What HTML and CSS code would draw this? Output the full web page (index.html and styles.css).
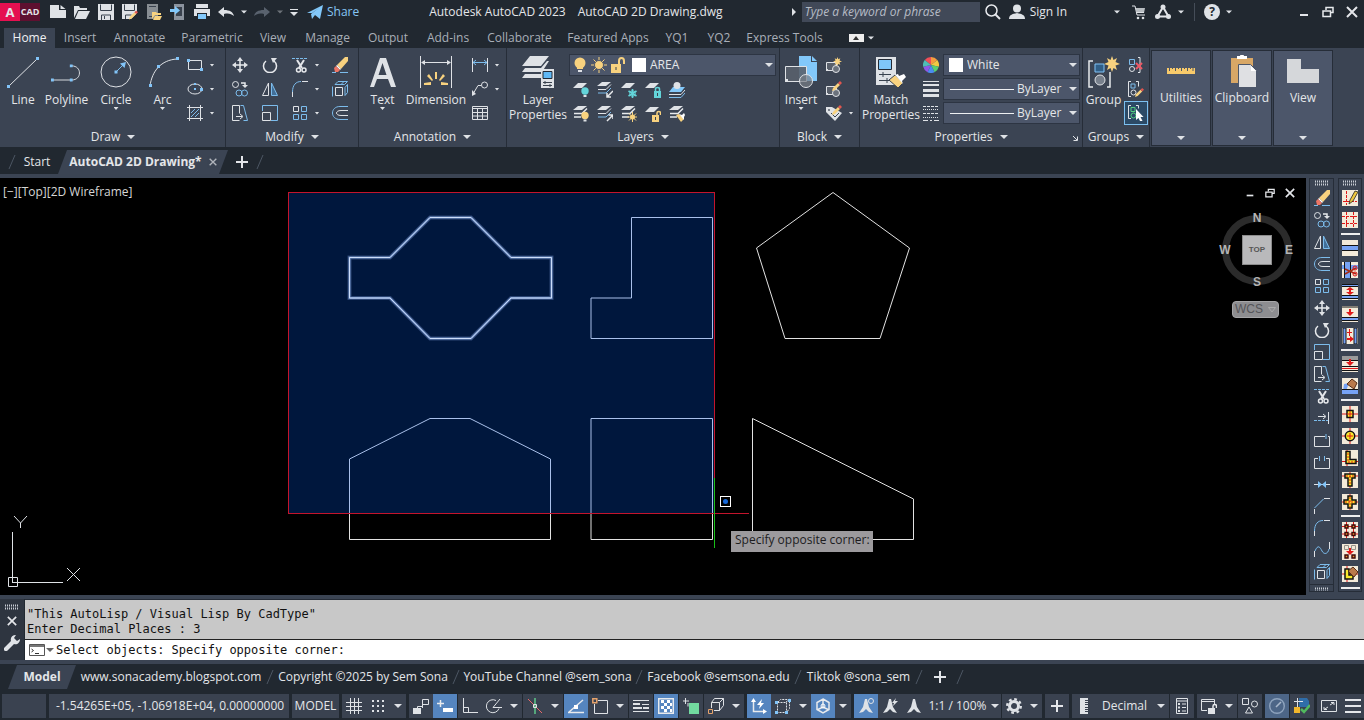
FILE: index.html
```
<!DOCTYPE html>
<html lang="en">
<head>
<meta charset="utf-8">
<title>Autodesk AutoCAD 2023 - AutoCAD 2D Drawing.dwg</title>
<link rel="stylesheet" href="styles.css">
</head>
<body>
<svg class="defs" aria-hidden="true">
  <defs>
    <symbol id="chev" viewBox="0 0 8 8"><path class="fw" d="M0 2h8L4 6z"/></symbol>
    <symbol id="slash" viewBox="0 0 8 16"><path class="slashline" d="M1 15 7 1"/></symbol>
    <symbol id="plus" viewBox="0 0 16 16"><path class="w2" d="M8 2v12M2 8h12"/></symbol>
    <symbol id="grip" viewBox="0 0 16 6"><path class="grip" d="M1 1.500h14M1 4.500h14"/></symbol>

    <symbol id="new" viewBox="0 0 16 16"><path class="fw" d="M0 1h9v5h7v8H0zM10.500 1l5 4h-5z"/></symbol>
    <symbol id="open" viewBox="0 0 16 16"><path class="fw" d="M0 2h5l1 2h7v2H4L0 14zM4.500 7H16l-4 8H1z"/></symbol>
    <symbol id="save" viewBox="0 0 16 16"><path class="fw" d="M0 0h16v16H0z"/><path class="dk" d="M2.500.500v6h11v-6M3.500 16v-5h9v5M6.500 12v3"/></symbol>
    <symbol id="pencil" viewBox="0 0 10 10"><path fill="#f8d27f" d="M1 7 6 2l2 2-5 5-3 1z"/><path fill="#e2564f" d="m6 2 2-2 2 2-2 2z"/></symbol>
    <symbol id="saveas" viewBox="0 0 16 16"><path class="fw" d="M0 0h15v9l-6 6H0z"/><path class="dk" d="M2.500.500v6h10v-6M3.500 15v-4h6"/><use href="#pencil" x="7" y="6" width="9" height="10"/></symbol>
    <symbol id="webopen" viewBox="0 0 16 16"><path class="fw" fill-opacity=".55" d="M1 0h11v15H1z"/><path class="dk" d="M3 2.500h7M3 12.500h4"/><path fill="#f8d27f" d="M6 8h4l1 1h4v2H9l-3 4zM9 12h7l-2 4H7z"/></symbol>
    <symbol id="websave" viewBox="0 0 16 16"><path fill="#8b939e" d="M4 0h10v16H4z"/><path fill="#39424e" d="M6 3h6v9H6z"/><path fill="#82c8fa" d="M0 5h5V2l5 4.500-5 4V8H0z"/></symbol>
    <symbol id="print" viewBox="0 0 16 16"><path class="fw" d="M2 0h12v4H2zM0 5h16v7h-3V9H3v3H0z"/><path fill="#82c8fa" d="M4 10h8v5H4z"/></symbol>
    <symbol id="undo" viewBox="0 0 16 16"><path class="fw" d="M0 8l6-5v3c6 0 9 2 10 6-3-2-5-3-10-2v3z"/></symbol>
    <symbol id="redo" viewBox="0 0 16 16"><path fill="#59626e" d="M16 8l-6-5v3C4 6 1 8 0 12c3-2 5-3 10-2v3z"/></symbol>
    <symbol id="custom" viewBox="0 0 10 10"><path class="w" d="M1 2.500h8"/><path class="fw" d="M1 5h8L5 9z"/></symbol>
    <symbol id="share" viewBox="0 0 16 16"><path fill="#82c8fa" d="M0 9 16 1l-3 14-5-4-3 4-1-5 8-6-7 5z"/></symbol>
    <symbol id="glass" viewBox="0 0 16 16"><circle class="wm" cx="6.500" cy="6.500" r="5.500"/><path class="w2" d="m10 10 5 5"/></symbol>
    <symbol id="user" viewBox="0 0 16 16"><circle class="fw" cx="8" cy="4.500" r="4"/><path class="fw" d="M0 15c0-4 3-5 8-6 5 1 8 2 8 6z"/></symbol>
    <symbol id="cart" viewBox="0 0 16 16"><path class="w" d="M1 2h3l2 9h8M5 8.500h8"/><path class="fw" fill-opacity=".8" d="M4.500 4H14l-1 5H6z"/><circle class="fw" cx="7" cy="14" r="1.300"/><circle class="fw" cx="12" cy="14" r="1.300"/></symbol>
    <symbol id="tri" viewBox="0 0 16 16"><path class="w2" d="M8 3 2.500 12.500h11z"/><circle class="fw" cx="8" cy="3" r="2.500"/><circle class="fw" cx="2.500" cy="12.500" r="2.500"/><circle class="fw" cx="13.500" cy="12.500" r="2.500"/></symbol>
    <symbol id="restore" viewBox="0 0 12 12"><path class="wm" d="M4 4V1.500h7v5H9M1 5h7.500v5.500H1z"/></symbol>
    <symbol id="close" viewBox="0 0 12 12"><path class="w2" d="m1 1 10 10M11 1 1 11"/></symbol>
    <symbol id="min" viewBox="0 0 12 12"><path class="w2" d="M2 9h8"/></symbol>

    <symbol id="line" viewBox="0 0 32 32"><path class="w" d="M2 30 30 3"/><path class="fb" d="M0 29h3v3H0zM29 1h3v3h-3z"/></symbol>
    <symbol id="pline" viewBox="0 0 34 32"><path class="w" d="M2 24.500h20c11 0 11-15 0-15"/><path class="fb" d="M0 23h3v3H0zM20 23h3v3h-3zM20 8h3v3h-3z"/></symbol>
    <symbol id="circle" viewBox="0 0 32 32"><circle class="w" cx="16" cy="16" r="15"/><path class="b" d="m16 16 9-9"/><path class="fb" d="M14.500 14.500h3v3h-3zM26 6l-6 1.500L24.500 12z"/></symbol>
    <symbol id="arc" viewBox="0 0 32 32"><path class="w" d="M3 30C5 15 14 4 30 3"/><path class="fb" d="M2 28h3v3H2zM10 9h3v3h-3zM29 1h3v3h-3z"/></symbol>
    <symbol id="rect" viewBox="0 0 16 16"><path class="w" d="M1.500 3.500h13v9h-13z"/><path class="fb" d="M0 2h3v3H0zM13 11h3v3h-3z"/></symbol>
    <symbol id="ellipse" viewBox="0 0 16 16"><ellipse class="w" cx="8" cy="8" rx="7" ry="5"/><path class="fb" d="M7 2h2v2H7zM7 7h2v2H7zM13 7h3v3h-3z"/></symbol>
    <symbol id="hatch" viewBox="0 0 16 16"><path class="w" d="M2.500 0v16M13.500 0v16M0 2.500h16M0 13.500h16"/><path class="b" d="m4 8 4-4M4 12l8-8M8 12l4-4"/></symbol>

    <symbol id="move" viewBox="0 0 16 16"><path class="wm" d="M8 2v12M2 8h12"/><path class="fw" d="m8 0 3 4H5zM8 16l-3-4h6zM0 8l4-3v6zM16 8l-4 3V5z"/></symbol>
    <symbol id="rotate" viewBox="0 0 16 16"><path class="wm" d="M4 4a6.500 6.500 0 1 0 8 0"/><path class="fw" d="M9 1h6l-4 5z"/></symbol>
    <symbol id="trim" viewBox="0 0 16 16"><path class="b dash" d="M0 1.500h16"/><path class="w2" d="m5 3 5 8M12 3 7 11"/><circle class="wm" cx="6.500" cy="13" r="2"/><circle class="wm" cx="12" cy="13" r="2"/></symbol>
    <symbol id="erase" viewBox="0 0 16 16"><path fill="#f8d27f" d="m5 8 8-8h3v4l-7 8z"/><path fill="#fff" d="m4 9 1-1 4 4-1 1z"/><path fill="#ed7565" d="m2 11 2-2 4 4-2 2H3z"/><path class="b" d="M0 15.500h4M8 15.500h8"/></symbol>
    <symbol id="copy" viewBox="0 0 16 16"><circle class="w" cx="3.500" cy="3.500" r="3"/><circle class="b" cx="7" cy="12" r="3"/><circle class="b" cx="12.500" cy="12" r="3"/><path class="wm" d="M9 2h4v3"/><path class="fw" d="M10 4h6l-3 3z"/></symbol>
    <symbol id="mirror" viewBox="0 0 16 16"><path class="w" d="M6.500 2v12.500h-6z"/><path class="b halfblue" d="M9.500 2v12.500h6z"/></symbol>
    <symbol id="fillet" viewBox="0 0 16 16"><path class="b" d="M.500 11C.500 4 4 .500 9 .500"/><path class="w" d="M10 .500h6M.500 11v5"/></symbol>
    <symbol id="explode" viewBox="0 0 16 16"><path class="w" d="M3.500 6.500h7v8h-7z"/><path class="b" d="M.500 5.500v10M3 3.500 6 .500h9.500l-3 3zM13 14.500v-8l2.500-3v8zM9 3.500l3-3"/></symbol>
    <symbol id="stretch" viewBox="0 0 16 16"><path class="w" d="M7.500 15.500h-7V.500h7v8"/><path class="b" d="M8.500.500h3l4 15h-4"/><path class="w" d="M4 11.500h6M8 9l3 2.500L8 14"/></symbol>
    <symbol id="scale" viewBox="0 0 16 16"><path class="b" d="M.500 6V.500h15v15H9"/><path class="w" d="M.500 7.500h8v8h-8z"/></symbol>
    <symbol id="array" viewBox="0 0 16 16"><path class="w" d="M1.500 1.500h5v5h-5z"/><path class="b" d="M9.500 1.500h5v5h-5zM1.500 9.500h5v5h-5zM9.500 9.500h5v5h-5z"/></symbol>
    <symbol id="offset" viewBox="0 0 16 16"><path class="b" d="M16 1.500H8c-10 0-10 13 0 13h8"/><path class="w" d="M16 5.500H9c-6 0-6 5 0 5h7"/></symbol>

    <symbol id="text" viewBox="0 0 32 32"><path class="fw" fill-rule="evenodd" d="M13 2h6l10 29h-5l-3-8H10l-3 8H3zM11.500 19h8L15.500 7z"/></symbol>
    <symbol id="dim" viewBox="0 0 32 32"><path class="w" d="M.500 0v32M31.500 0v32M2 6.500h28"/><path class="fw" d="m1 6.500 4-2.500v5zM31 6.500l-4-2.500v5z"/><path class="fy" d="M15 16h2v7h-2zM7 20l2-2 4 6-1 1zM25 20l-2-2-4 6 1 1zM4 27l7-1v3H4zM28 27l-7-1v3h7z"/></symbol>
    <symbol id="dims" viewBox="0 0 16 16"><path class="w" d="M.500 1v14M15.500 1v14"/><path class="b" d="M1 5.500h14M4 3 1 5.500 4 8M12 3l3 2.500L12 8"/></symbol>
    <symbol id="leader" viewBox="0 0 16 16"><circle class="w" cx="12.500" cy="4" r="3"/><path class="w" d="M9 4.500H6L1 13"/><path class="fw" d="M0 15v-6l4 4z"/></symbol>
    <symbol id="table" viewBox="0 0 16 16"><path class="w" d="M.500 1.500h15v13H.500zM.500 3.500h15M.500 7.500h15M.500 11h15M5.500 4v10M10.500 4v10"/></symbol>

    <symbol id="layprop" viewBox="0 0 32 32"><path class="fw" d="M8 0h19l-8 10H0zM0 16l3-4h16l6-7h2l-7 11zM0 22l3-4h16v4z"/><path class="fw" d="M19 13h13v19H19z"/><path fill="#5fb8f5" stroke="#222a35" d="M21 15.500h9v7h-9z"/><path class="dk" d="M21 26.500h9M21 29.500h9M23 25v3M28 28v3"/></symbol>
    <symbol id="bulb" viewBox="0 0 16 16"><circle class="fy" cx="8" cy="6" r="5.500"/><path class="fy" d="M5 9h6v3H5z"/><path class="fw" d="M6 13h4v2H6z"/></symbol>
    <symbol id="sun" viewBox="0 0 16 16"><path class="ys" d="M8 0v16M0 8h16M2.500 2.500l11 11M13.500 2.500l-11 11"/><circle class="fy" cx="8" cy="8" r="4.500" stroke="#4c5669"/></symbol>
    <symbol id="lock" viewBox="0 0 16 16"><path class="fy" d="M1 7h10v9H1z"/><path fill="none" stroke="#f8d27f" stroke-width="2" d="M9 7V4c0-4 5-4 5 0v3"/><path class="dk" d="M6 10v3"/></symbol>
    <symbol id="sheet" viewBox="0 0 16 16"><path class="fw" d="M5 1h9L9 6H0z"/></symbol>
    <symbol id="stack" viewBox="0 0 16 16"><path class="fw" d="M5 0h9l-5 4H0z"/><path class="w" d="M1 7.500h8l5-5"/><path class="b" d="M1 11h8l5-5"/></symbol>
    <symbol id="stackw" viewBox="0 0 16 16"><path class="fw" d="M5 0h9l-5 4H0z"/><path class="wm" d="M1 7.500h8l5-5M1 11h7"/></symbol>
    <symbol id="l1" viewBox="0 0 16 16"><use href="#sheet"/><circle cx="12" cy="9" r="3.700" fill="#63d4d9"/><path class="fw" d="M10.500 13h3v2h-3z"/></symbol>
    <symbol id="l2" viewBox="0 0 16 16"><use href="#stack"/><path class="wm" d="m16 9-6 6M10 11v4h4"/></symbol>
    <symbol id="l3" viewBox="0 0 16 16"><use href="#sheet"/><path fill="none" stroke="#63d4d9" stroke-width="1.600" d="M11.500 7v9M7.500 9l8 5M15.500 9l-8 5"/><circle cx="11.500" cy="11.500" r="2.800" fill="none" stroke="#63d4d9"/></symbol>
    <symbol id="l4" viewBox="0 0 16 16"><use href="#sheet"/><path fill="#63d4d9" d="M9 9h7v7H9z"/><path fill="none" stroke="#63d4d9" stroke-width="1.500" d="M10.500 9V7c0-2 4-2 4 0v2"/><path class="dk" d="M12.500 11v3"/></symbol>
    <symbol id="l5" viewBox="0 0 16 16"><path fill="#82c8fa" d="M4 5h12l-4 5H0z"/><circle class="fw" cx="8" cy="3.500" r="3.500"/><path class="w" d="M0 12.500h12L16 8"/><path class="b" d="M0 15.500h12l4-4.500"/></symbol>
    <symbol id="l6" viewBox="0 0 16 16"><use href="#stackw"/><circle class="fy" cx="12" cy="9.500" r="3.700"/><path class="fw" d="M10.500 13.500h3v2h-3z"/></symbol>
    <symbol id="l7" viewBox="0 0 16 16"><use href="#stack"/><path class="wm" d="m10 15 6-6M11.500 9H16v4"/></symbol>
    <symbol id="l8" viewBox="0 0 16 16"><use href="#stackw"/><path class="ys" d="M11.500 6v10M6.500 11h10M8 7.500l7 7M15 7.500l-7 7"/><circle class="fy" cx="11.500" cy="11" r="2.500"/></symbol>
    <symbol id="l9" viewBox="0 0 16 16"><use href="#sheet"/><path class="fy" d="M7 9h7v7H7z"/><path fill="none" stroke="#f8d27f" stroke-width="1.500" d="M12 9V7c0-2 3.500-2 3.500 0v2"/><path class="dk" d="M10.500 11v3"/></symbol>
    <symbol id="l10" viewBox="0 0 16 16"><use href="#stackw"/><path class="fy" d="m7 9 3-1 5 5-3 3z"/><path fill="#fff" d="m10 8 3 1 2-2 1 2-1 2v3z"/></symbol>

    <symbol id="insert" viewBox="0 0 32 32"><path fill="#82c8fa" d="M14 0h12v6h6v19H14zM27 0l5 5h-5z"/><path fill="#59606b" fill-opacity=".9" stroke="#dfe2e6" d="M.500 10.500h21v15H.500z"/><circle cx="21" cy="25" r="6.500" fill="#777d86" fill-opacity=".7" stroke="#dfe2e6"/><path class="fw" d="M0 23h3v3H0z"/></symbol>
    <symbol id="blk" viewBox="0 0 16 16"><path fill="#59606b" stroke="#dfe2e6" d="M.500 5.500h10v8H.500z"/><circle cx="10" cy="12" r="3.500" fill="#6b727c" stroke="#dfe2e6"/><path class="fw" d="M0 12h2v2H0z"/></symbol>
    <symbol id="star" viewBox="0 0 16 16"><path class="fy" d="m8 0 1.500 4L13 2l-1.500 4L16 8l-4.500 1.500L13 14l-3.500-2L8 16l-1.500-4L3 14l1.500-4.500L0 8l4.500-2L3 2l3.500 2z"/></symbol>
    <symbol id="blk1" viewBox="0 0 16 16"><use href="#blk"/><use href="#star" x="7" y="0" width="9" height="9"/></symbol>
    <symbol id="blk2" viewBox="0 0 16 16"><use href="#blk"/><use href="#pencil" x="6" y="0" width="10" height="10"/></symbol>
    <symbol id="blk3" viewBox="0 0 16 16"><path class="fw" d="M0 2h6l10 6-7 8-9-9z"/><circle class="dk" cx="3" cy="5" r=".5"/><path class="dk" d="m5 8 4 4 4-4"/><use href="#pencil" x="6" y="0" width="10" height="10"/></symbol>
    <symbol id="match" viewBox="0 0 32 32"><path class="fw" d="M1 1h20v28H1z"/><path fill="#7fc6f8" stroke="#222a35" d="M3.500 3.500h13v10h-13z"/><path class="dk" d="M4 18.500h12M4 24.500h10M8 16v5M12 22v5"/><path fill="#f8d27f" stroke="#39424e" d="m14 24 6-5 8 8-5 5z"/><path fill="#fff" d="m20 19 3-1 1 2 5-2 2 3-4 4 1 3z"/></symbol>
    <symbol id="wheel" viewBox="0 0 16 16"><path fill="#f04e58" d="M8 8 8 0A8 8 0 0 0 1.700 3z"/><path fill="#f59d3f" d="M8 8V0a8 8 0 0 1 6.300 3z"/><path fill="#f2c943" d="m8 8 6.300-5A8 8 0 0 1 15.800 9.800z"/><path fill="#59cf70" d="m8 8 7.800 1.800A8 8 0 0 1 11.500 15.200z"/><path fill="#4a8df0" d="m8 8 3.500 7.200a8 8 0 0 1-7 0z"/><path fill="#8e58e8" d="m8 8-3.500 7.200A8 8 0 0 1 .2 9.800z"/><path fill="#4fbdb6" d="M8 8 .2 9.800A8 8 0 0 1 1.700 3z"/></symbol>
    <symbol id="lw" viewBox="0 0 16 16"><path class="fw" d="M0 0h16v1H0zM0 3h16v2H0zM0 8h16v3H0zM0 13h16v3H0z"/></symbol>
    <symbol id="lt" viewBox="0 0 16 16"><path class="w dash" d="M0 1.500h16M0 8.500h16"/><path class="w" stroke-dasharray="1 1" d="M0 4.500h16M0 12.500h16"/><path class="w" d="M0 15.500h5M7 15.500h2M11 15.500h5"/></symbol>

    <symbol id="group" viewBox="0 0 32 32"><path class="wm" d="M5 5H1v26h4M19 31h3V16"/><path fill="#315f87" stroke="#82c4f8" d="M7 8h9v8H7z"/><circle cx="12" cy="24" r="5" fill="#77808c" stroke="#dfe2e6"/><use href="#star" x="16" y="0" width="16" height="16"/></symbol>
    <symbol id="gs" viewBox="0 0 16 16"><path class="w" d="M3 .500H.500v15H3M8 .500h2.500v5"/><path class="b" d="M3 3h4v4H3z"/><circle class="w" cx="5.500" cy="11.500" r="2.500"/></symbol>
    <symbol id="ungroup" viewBox="0 0 16 16"><path class="b" d="M1.500 2.500h5v5h-5z"/><circle class="w" cx="4" cy="12" r="2.500"/><path class="w" d="M10 .500h2v15h-2"/><path stroke="#ec5966" stroke-width="2" d="m8 6 6 6M14 6l-6 6"/></symbol>
    <symbol id="gedit" viewBox="0 0 16 16"><use href="#gs"/><use href="#pencil" x="7" y="7" width="9" height="9"/></symbol>
    <symbol id="gsel" viewBox="0 0 16 16"><path class="w" d="M3 .500H.500v13H3M8 .500h2.500v3"/><path fill="none" stroke="#53cf80" d="M3 2.500h4v4H3z"/><circle cx="5.500" cy="10.500" r="2.500" fill="none" stroke="#53cf80"/><path fill="#fff" d="M8 4v11l2.500-2 2 4 2-1-2-4h3z"/></symbol>
    <symbol id="ruler" viewBox="0 0 32 32"><path fill="#f8ca6b" d="M2 13h28v6H2z"/><path stroke="#4c5669" d="M4.500 12v4M7.500 12v2M10.500 12v4M13.500 12v2M16.500 12v4M19.500 12v2M22.500 12v4M25.500 12v2M28 12v4"/></symbol>
    <symbol id="clip" viewBox="0 0 32 32"><path fill="#d8a766" d="M5 3h22v25H5z"/><path fill="#fff" d="M11 4V1h3c0-2 4-2 4 0h3v3z"/><path fill="#dfe0e3" stroke="#4c5669" d="M12.500 9.500h12l6 6v17h-18z"/><path fill="#fff" d="M25 11v5h5z"/></symbol>
    <symbol id="view" viewBox="0 0 32 32"><path fill="#d5d7da" d="M0 4h14v10h18v14H0z"/></symbol>

    <symbol id="extend" viewBox="0 0 16 16"><path class="w" d="M14.500 2v12M4 6.500h7M9 4l3 2.500L9 9"/><path class="b dash" d="M0 10.500h14"/></symbol>
    <symbol id="breakp" viewBox="0 0 16 16"><path class="w" d="M11 4.500H.500v10h15v-10H14"/><path class="b" d="M12 2v5"/></symbol>
    <symbol id="brk" viewBox="0 0 16 16"><path class="w" d="M4 4.500H.500v10h15v-10H12"/><path class="b" d="M5.500 2v5M10.500 2v5"/></symbol>
    <symbol id="join" viewBox="0 0 16 16"><path class="w" d="M0 8.500h16"/><path class="fb" d="m4 5 4 3.500L4 12zM12 5 8 8.500l4 3.500z"/></symbol>
    <symbol id="chamfer" viewBox="0 0 16 16"><path class="w" d="M.500 11v5M10 .500h6"/><path class="b" d="m.500 10 9-9"/></symbol>
    <symbol id="blend" viewBox="0 0 16 16"><path class="b" d="M1 9C4 2 6 5 8 9s6 3 7-2"/><path class="w" d="M.500 9v6M15.500 0v7"/></symbol>

    <symbol id="tile" viewBox="0 0 16 16"><path fill="#f3ead9" d="M0 0h16v16H0z"/></symbol>
    <symbol id="t1" viewBox="0 0 16 16"><use href="#tile"/><path class="r" stroke-dasharray="3 1" d="M4.500 1v14M1 11.500h14"/><path fill="#f0c83d" stroke="#222" stroke-width=".8" d="m7 14 1-4 5-9 3 1-5 9z"/></symbol>
    <symbol id="t2" viewBox="0 0 16 16"><use href="#tile"/><path class="r" stroke-dasharray="3 1" d="M4.500 0v16M11.500 0v16M0 4.500h16M0 11.500h16"/></symbol>
    <symbol id="t3" viewBox="0 0 16 16"><use href="#tile"/><path fill="#76a2f4" stroke="#111" d="M-1 5.500h18v5H-1z"/></symbol>
    <symbol id="t4" viewBox="0 0 16 16"><use href="#tile"/><path fill="#76a2f4" d="M3 0h5v16H3zM0 3h16v4H0z"/><path stroke="#111" d="M2.500 0v16M8.500 0v16"/><path fill="none" stroke="#a42d17" stroke-width="1.700" d="m3 7 11 5M3 12l11-6"/><circle class="r" cx="13" cy="6" r="2"/><circle class="r" cx="13" cy="12" r="2"/></symbol>
    <symbol id="t5" viewBox="0 0 16 16"><use href="#tile"/><path fill="#76a2f4" stroke="#111" d="M-1 .500h18v2H-1zM-1 11.500h18v3H-1z"/><path fill="#e01818" d="m8 3 4 3H9v2h3l-4 3-4-3h3V6H4z"/></symbol>
    <symbol id="t6" viewBox="0 0 16 16"><use href="#tile"/><path fill="#76a2f4" stroke="#111" d="M-1 11.500h18v3H-1zM-1 1h18"/><path fill="#e01818" d="M7 3h2v3h3l-4 4-4-4h3z"/></symbol>
    <symbol id="t7" viewBox="0 0 16 16"><use href="#tile"/><path fill="#76a2f4" stroke="#111" d="M1 0h3v16H1zM12 0h3v16h-3z"/><path fill="#e01818" d="M7 1h1v3h2v1H8v3H7V5H5V4h2zM5 10h3V8l4 3-4 3v-2H5z"/></symbol>
    <symbol id="t8" viewBox="0 0 16 16"><use href="#tile"/><path fill="#9a9a9a" d="M0 0h16v4H0z"/><path stroke="#111" d="M0 4.500h16M0 10.500h16M0 14.500h16"/><path class="r" d="M0 12.500h16"/><path fill="#e01818" d="M7 3h2v3h3l-4 4-4-4h3z"/></symbol>
    <symbol id="t9" viewBox="0 0 16 16"><use href="#tile"/><path fill="#76a2f4" d="M0 12h16v4H0zM2 6l5-1-3 8H1z"/><path stroke="#111" d="M0 11.500h16"/><path fill="#b9794b" stroke="#572d15" d="m5 6 5-5 5 4-3 6z"/></symbol>
    <symbol id="u1" viewBox="0 0 16 16"><use href="#tile"/><path class="r" d="M8 0v16M0 8h16"/><path fill="#fbe92c" stroke="#111" stroke-width="1.500" d="M5 4.500h6v7H5z"/><path class="r" d="M8 5v6M5 8h6"/></symbol>
    <symbol id="u2" viewBox="0 0 16 16"><use href="#tile"/><path class="r" d="M8 0v16M0 8h16"/><circle cx="8" cy="8" r="4.700" fill="#fbe92c" stroke="#111" stroke-width="1.500"/><path class="r" d="M8 5v6M5 8h6"/></symbol>
    <symbol id="u3" viewBox="0 0 16 16"><use href="#tile"/><path class="r" d="M5 0v16M0 11.500h16"/><path fill="#fbe92c" stroke="#111" stroke-width="1.500" d="M4 1.500h4v8h6v4H4z"/><path class="r" stroke-dasharray="2 1" d="M6 3v9h7"/></symbol>
    <symbol id="u4" viewBox="0 0 16 16"><use href="#tile"/><path class="r" d="M8 0v16M0 4h16"/><path fill="#fbe92c" stroke="#111" stroke-width="1.500" d="M3 2h10v4h-3v8H6V6H3z"/><path class="r" stroke-dasharray="2 1" d="M4 4h8M8 4v9"/></symbol>
    <symbol id="u5" viewBox="0 0 16 16"><use href="#tile"/><path class="r" d="M8 0v16M0 8h16"/><path fill="#fbe92c" stroke="#111" stroke-width="1.500" d="M6 2h4v4h4v4h-4v4H6v-4H2V6h4z"/><path class="r" stroke-dasharray="2 1" d="M8 3v10M3 8h10"/></symbol>
    <symbol id="v1" viewBox="0 0 16 16"><use href="#tile"/><path class="r" d="M4.500 0v16M11.500 0v16M0 4.500h16M0 12h16"/><path fill="#e78b2c" stroke="#3c0808" stroke-width="1.400" d="M3 3h3v3H3zM10 3h3v3h-3zM3 10.500h3v3H3zM10 10.500h3v3h-3z"/></symbol>
    <symbol id="v2" viewBox="0 0 16 16"><use href="#tile"/><path fill="none" stroke="#97938a" d="M2.500 1.500h4v4h-4zM9.500 1.500h4v4h-4z"/><path fill="#e01818" d="M7 4h2v3h3l-4 4-4-4h3z"/><path fill="#e78b2c" stroke="#3c0808" stroke-width="1.400" d="M3 11h3v3H3zM10 11h3v3h-3z"/></symbol>
    <symbol id="v3" viewBox="0 0 16 16"><use href="#tile"/><path class="r" d="M5 0v16M0 8h16"/><path fill="#fbe92c" stroke="#111" stroke-width="1.500" d="M3 3h4v6h4v4H3z"/><path fill="#b9794b" stroke="#572d15" d="m6 5 5-4 5 5-4 5z"/></symbol>

    <symbol id="wrench" viewBox="0 0 16 16"><path class="fw" d="M0 13 7 6c-1-3 1-6 5-6l-2 3 3 3 3-2c0 4-3 6-6 5l-7 7c-2 1-4-1-3-3z"/></symbol>
    <symbol id="prompt" viewBox="0 0 16 12"><path fill="#fff" stroke="#555" d="M.500.500h15v11H.500z"/><path fill="#777" d="M1 1h14v2H1z"/><path fill="none" stroke="#333" d="m2.500 5 2 1.500-2 1.500M6 9.500h4"/></symbol>

    <symbol id="grid" viewBox="0 0 16 16"><path class="w" d="M4.500 0v16M8.500 0v16M12.500 0v16M0 4.500h16M0 8.500h16M0 12.500h16"/></symbol>
    <symbol id="snap" viewBox="0 0 16 16"><path class="dots" d="M2 3h12M2 8h12M2 13h12"/></symbol>
    <symbol id="infer" viewBox="0 0 16 16"><path class="w" d="M9.500 10v-8.500h6v5h-6M4.500 10V8.500h5"/><path class="fw" d="M0 10h8v6H0z"/></symbol>
    <symbol id="dyn" viewBox="0 0 16 16"><path class="wm" d="M3.500 2v7M0 5.500h7"/><path fill="#fff" d="M6 10h10v4H6z"/></symbol>
    <symbol id="ortho" viewBox="0 0 16 16"><path class="w" d="M1.500 0v14.500H16M1.500 9.500h5v5"/></symbol>
    <symbol id="polar" viewBox="0 0 16 16"><path class="w" d="M10 2.500a6.500 6.500 0 1 0 3 8M16 9.500H7L14 1"/></symbol>
    <symbol id="iso" viewBox="0 0 16 16"><path stroke="#e86a6a" d="M1 1l14 14"/><path stroke="#5fc98a" stroke-width="1.500" d="M8 0v16"/><path class="w" d="M6.500 6.500h3v3h-3z"/></symbol>
    <symbol id="track" viewBox="0 0 16 16"><path class="wm" d="M0 14.500h16M1 14 15 2"/><path fill="#fff" d="M6 7h4v4H6z"/></symbol>
    <symbol id="osnap" viewBox="0 0 16 16"><path class="w" d="M6 2.500h9.500v13h-13V6"/><path fill="none" stroke="#e6a36c" stroke-width="1.500" d="M.800.800h4v4h-4z"/></symbol>
    <symbol id="lws" viewBox="0 0 16 16"><path class="fw" d="M0 2h16v1H0zM0 5h7v2H0zM9 6h7v1H9zM0 9h9v2H0zM10 9h6v2h-6zM0 13h16v1H0z"/></symbol>
    <symbol id="transp" viewBox="0 0 16 16"><path class="wm" d="M.700.700h14.600v14.600H.700z"/><path fill="#fff" d="M3 2h3v3H3zM9 2h3v3H9zM6 5h3v3H6zM12 5h2v3h-2zM3 8h3v3H3zM9 8h3v3H9zM6 11h3v3H6zM12 11h2v3h-2z"/></symbol>
    <symbol id="cycle" viewBox="0 0 16 16"><path class="w" d="M2.500 0v6M0 3h6M5 8.500V5"/><path fill="#72dba0" d="M6 5h10v11H6z"/></symbol>
    <symbol id="osnap3" viewBox="0 0 16 16"><path class="w" d="M3.500 10V4.500h8v8H6M3.500 4.500l3-4h9v7l-4 5M11.500 4.500l4-4"/><path fill="none" stroke="#e6a36c" d="M.500 11.500h4v4h-4z"/></symbol>
    <symbol id="ducs" viewBox="0 0 16 16"><path class="wm" d="M2.500 2v11.500H14"/><path fill="#fff" d="M0 4 2.500 0 5 4zM12 11l4 2.500-4 2.500zM11 1 6 7h3l-1 4 5-6h-3z"/></symbol>
    <symbol id="filter" viewBox="0 0 16 16"><path class="w" stroke-dasharray="2 1" d="M2.500 4.500h9v10h-9zM2.500 4.500l3-3h9v9l-3 4M11 4l4-3"/><path class="fb" d="M0 3h3v3H0zM0 13h3v3H0zM10 13h3v3h-3zM13 1h3v3h-3z"/></symbol>
    <symbol id="gizmo" viewBox="0 0 16 16"><path class="wm" d="m8 1 6 3.500v7L8 15l-6-3.500v-7zM8 1v8l-6 3M8 9l6 3"/><circle cx="8" cy="8" r="2" fill="none" stroke="#fff"/></symbol>
    <symbol id="ann" viewBox="0 0 16 16"><path class="fw" d="M7 1h2l2 8 4 6-4-1-3-3-3 3-4 1 4-6z"/></symbol>
    <symbol id="ann1" viewBox="0 0 16 16"><use href="#ann"/><circle class="w" cx="13" cy="3" r="2.500"/></symbol>
    <symbol id="ann2" viewBox="0 0 16 16"><use href="#ann"/><path class="fw" d="m14 0-4 5h2l-1 3 5-5h-3z"/></symbol>
    <symbol id="gear" viewBox="0 0 16 16"><circle cx="8" cy="8" r="4.500" fill="none" stroke="#dfe2e6" stroke-width="3"/><circle cx="8" cy="8" r="6.800" fill="none" stroke="#dfe2e6" stroke-width="2.400" stroke-dasharray="2.700 2.640"/></symbol>
    <symbol id="unit" viewBox="0 0 16 16"><path class="fw" d="M4 0h8v2H9v1h3v1H9v1h3v1H9v1h3v2H9v1h3v1H9v1h3v1H9v1h3v2H4z"/></symbol>
    <symbol id="quick" viewBox="0 0 16 16"><path class="w" d="M2.500.500h11v15h-11zM2.500 3h11M8 6h4M8 9.500h4M8 13h4"/><path class="fw" d="M4 5h2v2H4zM4 8.500h2v2H4zM4 12h2v2H4z"/></symbol>
    <symbol id="lockui" viewBox="0 0 16 16"><path class="w" d="M6 12.500H.500v-11h13V6M.500 3.500h13"/><path class="fw" d="M7 10h7v6H7z"/><path class="wm" d="M12 10V8c0-2 3.500-2 3.500 0v2"/></symbol>
    <symbol id="isolate" viewBox="0 0 16 16"><path class="w" d="M.500.500h6v6h-6zM7 9l3.500 6h-7z"/><circle class="w" cx="12.500" cy="6" r="3"/></symbol>
    <symbol id="gfx" viewBox="0 0 16 16"><circle cx="8" cy="8" r="7.300" fill="none" stroke="#8ea3bd" stroke-width="1.400"/><path stroke="#a9b8cb" stroke-width="1.600" d="m7 9 5-5"/></symbol>
    <symbol id="trust" viewBox="0 0 16 16"><path fill="#2f6da8" d="M5 0h8l2 3v6H5z"/><path class="w" d="M3.500 0v9M0 3.500h9"/><path fill="#f1b62c" d="M0 9h6v6H0z"/><path fill="none" stroke="#51b95e" stroke-width="2.500" d="m7 11 3 3 6-7"/></symbol>
    <symbol id="full" viewBox="0 0 16 16"><path class="w" d="M.500 2.500h15v11H.500zM9 7l4-2.500M10 4.500h3V7M7 9l-4 2.500M3 9v2.500h3"/></symbol>
    <symbol id="menu" viewBox="0 0 16 16"><path class="w2" d="M0 2h16M0 8h16M0 14h16"/></symbol>
  </defs>
</svg>

<div class="app">
  <header class="titlebar">
    <nav class="quick" aria-label="Quick access">
      <button class="logo"><span class="logo-a">A</span><span class="logo-cad">CAD</span></button>
      <button class="q"><svg><use href="#new"/></svg></button>
      <button class="q"><svg><use href="#open"/></svg></button>
      <button class="q"><svg><use href="#save"/></svg></button>
      <button class="q"><svg><use href="#saveas"/></svg></button>
      <button class="q"><svg><use href="#webopen"/></svg></button>
      <button class="q"><svg><use href="#websave"/></svg></button>
      <button class="q"><svg><use href="#print"/></svg></button>
      <button class="q"><svg><use href="#undo"/></svg></button>
      <button class="drop"><svg><use href="#chev"/></svg></button>
      <button class="q"><svg><use href="#redo"/></svg></button>
      <button class="drop faint"><svg><use href="#chev"/></svg></button>
      <button class="more"><svg><use href="#custom"/></svg></button>
      <button class="share"><svg><use href="#share"/></svg>Share</button>
    </nav>
    <h1 class="title"><span>Autodesk AutoCAD 2023</span><span>AutoCAD 2D Drawing.dwg</span></h1>
    <div class="title-right">
      <span class="play"></span>
      <input class="search" type="text" placeholder="Type a keyword or phrase" aria-label="Search">
      <button class="q"><svg><use href="#glass"/></svg></button>
      <button class="signin"><svg><use href="#user"/></svg>Sign In</button>
      <button class="drop"><svg><use href="#chev"/></svg></button>
      <button class="q cart"><svg><use href="#cart"/></svg></button>
      <button class="q"><svg><use href="#tri"/></svg></button>
      <button class="drop"><svg><use href="#chev"/></svg></button>
      <span class="vrule"></span>
      <button class="help">?</button>
      <button class="drop help-drop"><svg><use href="#chev"/></svg></button>
    </div>
    <div class="window-buttons">
      <button><svg><use href="#min"/></svg></button>
      <button><svg><use href="#restore"/></svg></button>
      <button><svg><use href="#close"/></svg></button>
    </div>
  </header>

  <nav class="ribbon-tabs">
    <button class="on">Home</button><button>Insert</button><button>Annotate</button><button>Parametric</button><button>View</button><button>Manage</button><button>Output</button><button>Add-ins</button><button>Collaborate</button><button>Featured Apps</button><button>YQ1</button><button>YQ2</button><button>Express Tools</button>
    <button class="collapse"><span></span><svg><use href="#chev"/></svg></button>
  </nav>

  <section class="ribbon">
    <div class="panel draw">
      <div class="panel-body">
        <button class="big b-line"><svg><use href="#line"/></svg>Line</button>
        <button class="big b-pline"><svg><use href="#pline"/></svg>Polyline</button>
        <button class="big b-circle"><svg><use href="#circle"/></svg>Circle<i class="down"></i></button>
        <button class="big b-arc"><svg><use href="#arc"/></svg>Arc<i class="down"></i></button>
        <div class="smalls with-drop">
          <button><svg><use href="#rect"/></svg></button><i class="down"></i>
          <button><svg><use href="#ellipse"/></svg></button><i class="down"></i>
          <button><svg><use href="#hatch"/></svg></button><i class="down"></i>
        </div>
      </div>
      <button class="panel-title">Draw<svg><use href="#chev"/></svg></button>
    </div>
    <div class="panel modify">
      <div class="panel-body">
        <div class="smalls modify-grid">
          <button><svg><use href="#move"/></svg></button><button><svg><use href="#rotate"/></svg></button><button><svg><use href="#trim"/></svg></button><i class="down"></i><button><svg><use href="#erase"/></svg></button>
          <button><svg><use href="#copy"/></svg></button><button><svg><use href="#mirror"/></svg></button><button><svg><use href="#fillet"/></svg></button><i class="down"></i><button><svg><use href="#explode"/></svg></button>
          <button><svg><use href="#stretch"/></svg></button><button><svg><use href="#scale"/></svg></button><button><svg><use href="#array"/></svg></button><i class="down"></i><button><svg><use href="#offset"/></svg></button>
        </div>
      </div>
      <button class="panel-title">Modify<svg><use href="#chev"/></svg></button>
    </div>
    <div class="panel annotation">
      <div class="panel-body">
        <button class="big b-text"><svg><use href="#text"/></svg>Text<i class="down"></i></button>
        <button class="big b-dim"><svg><use href="#dim"/></svg>Dimension</button>
        <div class="smalls with-drop">
          <button><svg><use href="#dims"/></svg></button><i class="down"></i>
          <button><svg><use href="#leader"/></svg></button><i class="down"></i>
          <button><svg><use href="#table"/></svg></button>
        </div>
      </div>
      <button class="panel-title">Annotation<svg><use href="#chev"/></svg></button>
    </div>
    <div class="panel layers">
      <div class="panel-body">
        <button class="big b-layer"><svg><use href="#layprop"/></svg>Layer<br>Properties</button>
        <div class="layer-tools">
          <div class="combo layer-combo">
            <svg><use href="#bulb"/></svg><svg><use href="#sun"/></svg><svg><use href="#lock"/></svg><i class="swatch"></i>
            <select aria-label="Layer"><option>AREA</option></select><svg class="c"><use href="#chev"/></svg>
          </div>
          <div class="smalls layer-grid">
            <button><svg><use href="#l1"/></svg></button><button><svg><use href="#l2"/></svg></button><button><svg><use href="#l3"/></svg></button><button><svg><use href="#l4"/></svg></button><button><svg><use href="#l5"/></svg></button>
            <button><svg><use href="#l6"/></svg></button><button><svg><use href="#l7"/></svg></button><button><svg><use href="#l8"/></svg></button><button><svg><use href="#l9"/></svg></button><button><svg><use href="#l10"/></svg></button>
          </div>
        </div>
      </div>
      <button class="panel-title">Layers<svg><use href="#chev"/></svg></button>
    </div>
    <div class="panel block">
      <div class="panel-body">
        <button class="big b-insert"><svg><use href="#insert"/></svg>Insert<i class="down"></i></button>
        <div class="smalls with-drop">
          <button><svg><use href="#blk1"/></svg></button><i></i>
          <button><svg><use href="#blk2"/></svg></button><i></i>
          <button><svg><use href="#blk3"/></svg></button><i class="down"></i>
        </div>
      </div>
      <button class="panel-title">Block<svg><use href="#chev"/></svg></button>
    </div>
    <div class="panel props">
      <div class="panel-body">
        <button class="big b-match"><svg><use href="#match"/></svg>Match<br>Properties</button>
        <div class="prop-grid">
          <svg><use href="#wheel"/></svg>
          <div class="combo"><i class="swatch"></i><select aria-label="Color"><option>White</option></select><svg class="c"><use href="#chev"/></svg></div>
          <svg><use href="#lw"/></svg>
          <div class="combo"><i class="sample"></i><select aria-label="Lineweight"><option>ByLayer</option></select><svg class="c"><use href="#chev"/></svg></div>
          <svg><use href="#lt"/></svg>
          <div class="combo"><i class="sample"></i><select aria-label="Linetype"><option>ByLayer</option></select><svg class="c"><use href="#chev"/></svg></div>
        </div>
      </div>
      <button class="panel-title">Properties<svg><use href="#chev"/></svg></button>
      <button class="launcher" aria-label="Properties dialog"><svg viewBox="0 0 6 6"><path class="w" d="m1 1 4 4M5.500 1.500v4h-4"/></svg></button>
    </div>
    <div class="panel groups">
      <div class="panel-body">
        <button class="big b-group"><svg><use href="#group"/></svg>Group</button>
        <div class="smalls">
          <button><svg><use href="#ungroup"/></svg></button>
          <button><svg><use href="#gedit"/></svg></button>
          <button class="active"><svg><use href="#gsel"/></svg></button>
        </div>
      </div>
      <button class="panel-title">Groups<svg><use href="#chev"/></svg></button>
    </div>
    <button class="folded"><svg><use href="#ruler"/></svg><span>Utilities</span><svg class="c"><use href="#chev"/></svg></button>
    <button class="folded"><svg><use href="#clip"/></svg><span>Clipboard</span><svg class="c"><use href="#chev"/></svg></button>
    <button class="folded"><svg><use href="#view"/></svg><span>View</span><svg class="c"><use href="#chev"/></svg></button>
  </section>

  <nav class="file-tabs">
    <svg class="slash"><use href="#slash"/></svg>
    <button class="start">Start</button>
    <button class="file-tab">AutoCAD 2D Drawing*<svg><use href="#close"/></svg></button>
    <button class="add"><svg><use href="#plus"/></svg></button>
    <svg class="slash"><use href="#slash"/></svg>
  </nav>

  <main class="workspace">
    <div class="canvas">
      <svg class="drawing" width="1306" height="417" viewBox="0 178 1306 417" role="img" aria-label="Drawing">
        <rect class="window" x="288.5" y="192.500" width="426" height="321"/>
        <path class="glow" d="M349.500 257.500h40.500l40-40h41l40 40h40.500v40.500h-40.500l-40 40.500h-41l-40-40.500h-40.500z"/>
        <path class="halo" d="M349.500 257.500h40.500l40-40h41l40 40h40.500v40.500h-40.500l-40 40.500h-41l-40-40.500h-40.500z"/>
        <path class="hot" d="M349.500 257.500h40.500l40-40h41l40 40h40.500v40.500h-40.500l-40 40.500h-41l-40-40.500h-40.500z"/>
        <path class="obj in" d="M631.500 217.500h81v121h-121.500v-40.500h40.500z"/>
        <path class="obj" d="m833 192.500 76.500 55.500-29.500 90.500h-95L756.500 248z"/>
        <path class="obj" d="M349.500 513v26.500h201V513M591 513v26.500h121.500V513"/>
        <path class="obj in" d="M349.500 513v-54l80.500-40.500h40l80.500 40.500v54M591 513v-94.500h121.500V513"/>
        <path class="obj" d="m752.500 418.500 161 80.500v40.500h-161z"/>
        <path class="axis-x" d="M288 513.500h461"/>
        <path class="axis-y" d="M714.500 478v70"/>
        <rect class="pick" x="720.5" y="496.500" width="10" height="10"/>
        <circle class="pick-dot" cx="725.5" cy="501.500" r="2.500"/>
      </svg>
      <p class="viewport-label">[−][Top][2D Wireframe]</p>
      <div class="prompt-tip">Specify opposite corner:</div>
      <svg class="ucs" width="90" height="80" viewBox="0 0 90 80"><path class="w" d="M12.500 17v51M12.500 67.500H63M8.500 62.500h9v9h-9zM14 1l6.500 7v5M27 1l-6.500 7M67 53l13 13M80 53 67 66"/></svg>
      <div class="view-buttons">
        <button><svg><use href="#min"/></svg></button><button><svg><use href="#restore"/></svg></button><button><svg><use href="#close"/></svg></button>
      </div>
      <div class="compass">
        <span class="n">N</span><span class="w-dir">W</span><button class="top">TOP</button><span class="e">E</span><span class="s">S</span>
      </div>
      <button class="wcs">WCS<svg viewBox="0 0 8 6"><path d="M.500.500h7L4 5z" fill="none" stroke="#aaa"/></svg></button>
    </div>
    <aside class="tools tools-modify">
      <svg class="grip-icon"><use href="#grip"/></svg>
      <button><svg><use href="#erase"/></svg></button><button><svg><use href="#copy"/></svg></button><button><svg><use href="#mirror"/></svg></button><button><svg><use href="#offset"/></svg></button><button><svg><use href="#array"/></svg></button><button><svg><use href="#move"/></svg></button><button><svg><use href="#rotate"/></svg></button><button><svg><use href="#scale"/></svg></button><button><svg><use href="#stretch"/></svg></button><button><svg><use href="#trim"/></svg></button><button><svg><use href="#extend"/></svg></button><button><svg><use href="#breakp"/></svg></button><button><svg><use href="#brk"/></svg></button><button><svg><use href="#join"/></svg></button><button><svg><use href="#chamfer"/></svg></button><button><svg><use href="#fillet"/></svg></button><button><svg><use href="#blend"/></svg></button><button><svg><use href="#explode"/></svg></button>
      <hr class="dark">
      <svg class="grip-icon"><use href="#grip"/></svg>
    </aside>
    <aside class="tools tools-custom">
      <svg class="grip-icon"><use href="#grip"/></svg>
      <button><svg><use href="#t1"/></svg></button><button><svg><use href="#t2"/></svg></button><hr>
      <button><svg><use href="#t3"/></svg></button><button><svg><use href="#t4"/></svg></button><button><svg><use href="#t5"/></svg></button><button><svg><use href="#t6"/></svg></button><button><svg><use href="#t7"/></svg></button><hr>
      <button><svg><use href="#t8"/></svg></button><button><svg><use href="#t9"/></svg></button><hr>
      <button><svg><use href="#u1"/></svg></button><button><svg><use href="#u2"/></svg></button><button><svg><use href="#u3"/></svg></button><button><svg><use href="#u4"/></svg></button><button><svg><use href="#u5"/></svg></button><hr>
      <button><svg><use href="#v1"/></svg></button><button><svg><use href="#v2"/></svg></button><button><svg><use href="#v3"/></svg></button><hr>
    </aside>
  </main>

  <section class="command">
    <div class="command-side">
      <svg class="grip-icon"><use href="#grip"/></svg>
      <button class="x"><svg><use href="#close"/></svg></button>
      <button><svg><use href="#wrench"/></svg></button>
    </div>
    <div class="command-main">
      <div class="history"><p>"This AutoLisp / Visual Lisp By CadType"</p><p>Enter Decimal Places : 3</p></div>
      <div class="prompt"><svg class="prompt-icon"><use href="#prompt"/></svg><svg class="prompt-chev" viewBox="0 0 8 8"><path fill="#666" d="M0 2h8L4 6z"/></svg><input type="text" aria-label="Command" value="Select objects: Specify opposite corner:"></div>
    </div>
  </section>

  <nav class="layout-tabs">
    <button class="model">Model</button>
    <button class="lt-1">www.sonacademy.blogspot.com</button><svg class="slash"><use href="#slash"/></svg>
    <button class="lt-2">Copyright ©2025 by Sem Sona</button><svg class="slash"><use href="#slash"/></svg>
    <button class="lt-3">YouTube Channel @sem_sona</button><svg class="slash"><use href="#slash"/></svg>
    <button class="lt-4">Facebook @semsona.edu</button><svg class="slash"><use href="#slash"/></svg>
    <button class="lt-5">Tiktok @sona_sem</button><svg class="slash"><use href="#slash"/></svg>
    <button class="add"><svg><use href="#plus"/></svg></button><svg class="slash"><use href="#slash"/></svg>
  </nav>

  <footer class="status">
    <div class="seg blank"></div>
    <div class="seg gap coords">-1.54265E+05, -1.06918E+04, 0.00000000</div>
    <div class="seg gap"><button class="space">MODEL</button></div>
    <div class="seg gap"><button><svg><use href="#grid"/></svg></button><button><svg><use href="#snap"/></svg></button><button class="d"><svg><use href="#chev"/></svg></button></div>
    <div class="seg gap"><button><svg><use href="#infer"/></svg></button><button class="hl"><svg><use href="#dyn"/></svg></button></div>
    <div class="seg"><button><svg><use href="#ortho"/></svg></button><button><svg><use href="#polar"/></svg></button><button class="d"><svg><use href="#chev"/></svg></button></div>
    <div class="seg"><button><svg><use href="#iso"/></svg></button><button class="d"><svg><use href="#chev"/></svg></button></div>
    <div class="seg"><button class="hl"><svg><use href="#track"/></svg></button><button><svg><use href="#osnap"/></svg></button><button class="d"><svg><use href="#chev"/></svg></button></div>
    <div class="seg"><button><svg><use href="#lws"/></svg></button></div>
    <div class="seg"><button class="hl"><svg><use href="#transp"/></svg></button></div>
    <div class="seg"><button><svg><use href="#cycle"/></svg></button></div>
    <div class="seg"><button><svg><use href="#osnap3"/></svg></button><button class="d"><svg><use href="#chev"/></svg></button></div>
    <div class="seg gap"><button class="hl"><svg><use href="#ducs"/></svg></button><button><svg><use href="#filter"/></svg></button><button class="d"><svg><use href="#chev"/></svg></button><button class="hl"><svg><use href="#gizmo"/></svg></button><button class="d"><svg><use href="#chev"/></svg></button></div>
    <div class="seg gap"><button class="hl"><svg><use href="#ann1"/></svg></button><button><svg><use href="#ann2"/></svg></button><button><svg><use href="#ann"/></svg></button><button class="scale-btn">1:1 / 100%<svg><use href="#chev"/></svg></button></div>
    <div class="seg"><button><svg><use href="#gear"/></svg></button><button class="d"><svg><use href="#chev"/></svg></button></div>
    <div class="seg gap"><button><svg><use href="#plus"/></svg></button></div>
    <div class="seg gap"><button class="unit-btn"><svg class="u"><use href="#unit"/></svg>Decimal<svg><use href="#chev"/></svg></button></div>
    <div class="seg"><button><svg><use href="#quick"/></svg></button></div>
    <div class="seg gap"><button><svg><use href="#lockui"/></svg></button><button class="d"><svg><use href="#chev"/></svg></button></div>
    <div class="seg"><button><svg><use href="#isolate"/></svg></button></div>
    <div class="seg gap"><button class="hl dim"><svg><use href="#gfx"/></svg></button></div>
    <div class="seg"><button><svg><use href="#trust"/></svg></button></div>
    <div class="seg gap"><button><svg><use href="#full"/></svg></button><button><svg><use href="#menu"/></svg></button></div>
  </footer>
</div>
</body>
</html>
```

FILE: styles.css
```
*, *::before { box-sizing: border-box; }
body {
  margin: 0;
  background: #212830;
  color: #e4e6e9;
  font: 12px/16px "Open Sans", "Noto Sans", sans-serif;
}
button, input, select { font: inherit; color: inherit; border: 0; background: none; padding: 0; margin: 0; }
button { white-space: nowrap; display: flex; align-items: center; justify-content: center; flex: none; }
svg { width: 16px; height: 16px; flex: none; display: block; }
p, h1 { margin: 0; }
.defs { position: absolute; width: 0; height: 0; }

/* shared icon strokes and fills */
.w { fill: none; stroke: #dfe2e6; }
.wm { fill: none; stroke: #e8eaed; stroke-width: 1.5; }
.w2 { fill: none; stroke: #e4e6ea; stroke-width: 2; }
.b { fill: none; stroke: #7cbcec; }
.halfblue { fill: #426f98; }
.r { fill: none; stroke: #e01818; }
.fw { fill: #dfe2e6; }
.fb { fill: #82c4f8; }
.fy { fill: #f8d27f; }
.ys { fill: none; stroke: #f8d27f; }
.dk { fill: none; stroke: #39424e; }
.dash { stroke-dasharray: 3 1; }
.dots { fill: none; stroke: #dfe2e6; stroke-width: 2; stroke-dasharray: 2 3; }
.grip { fill: none; stroke: #c9ced6; stroke-width: 2; stroke-dasharray: 1 1; }
.slashline { fill: none; stroke: #4c5663; }

.app { height: 100vh; min-height: 560px; display: flex; flex-direction: column; overflow: hidden; }

/* title bar */
.titlebar { height: 24px; display: flex; align-items: center; flex: none; padding-bottom: 1px; }
.titlebar button { height: 22px; }
.quick { display: flex; align-items: center; width: 360px; flex: none; }
.quick .logo { width: 40px; height: 18px; margin-right: 6px; background: #5e1030; font: bold 9px/18px "Open Sans", sans-serif; }
.logo-a { background: #e51050; width: 20px; font-size: 13px; flex: none; }
.logo-cad { width: 20px; flex: none; }
.q { width: 24px; }
.drop { width: 12px; }
.drop svg { width: 6px; height: 6px; }
.faint { opacity: .4; }
.more { width: 16px; }
.more svg { width: 10px; height: 10px; }
.share { margin-left: 5px; gap: 4px; color: #86c6f4; }
.title { flex: 1; display: flex; justify-content: center; gap: 12px; font: inherit; white-space: nowrap; }
.title-right { display: flex; align-items: center; flex: none; }
.play { border: 4px solid transparent; border-left-color: #dfe2e6; border-right: 0; margin-right: 6px; }
.search { width: 178px; height: 20px; padding: 0 3px; background: #414958; font-style: italic; margin-right: 1px; }
.search::placeholder { color: #b6bcc6; opacity: 1; }
.signin { gap: 5px; margin-left: 4px; margin-right: 44px; }
.cart { margin-left: 4px; }
.vrule { width: 1px; height: 18px; background: #454d58; margin: 0 9px 0 7px; }
.titlebar .help { width: 16px; height: 16px; border-radius: 8px; background: #dfe2e6; color: #212830; font-weight: bold; }
.help-drop { margin-left: 3px; }
.window-buttons { display: flex; margin-left: 57px; }
.window-buttons button { width: 24px; }
.window-buttons svg { width: 12px; height: 12px; }

/* ribbon tabs */
.ribbon-tabs {
  height: 24px; flex: none; padding: 4px 0 0 4px;
  display: grid; grid-template-columns: 51px 50px 69px 76px 46px 63px 58px 62px 81px 96px 42px 42px 89px 64px;
  color: #a9afb8;
}
.ribbon-tabs .on { background: #3b4453; color: #f0f1f3; }
.collapse { gap: 4px; }
.collapse span { width: 15px; height: 8px; background: #eee; }
.collapse span::before { content: ""; display: block; width: 0; margin: 2px auto; border: 3px solid transparent; border-bottom: 4px solid #333; border-top: 0; }
.collapse svg { width: 6px; height: 6px; }

/* ribbon */
.ribbon { height: 99px; flex: none; display: flex; background: #3b4453; padding-left: 1px; }
.panel { display: flex; flex-direction: column; border-right: 1px solid #262d38; position: relative; flex: none; }
.panel-body { height: 80px; display: flex; padding-top: 5px; }
.panel-title { height: 18px; gap: 7px; }
.panel-title svg, .c { width: 8px; height: 8px; }
.big { flex-direction: column; justify-content: flex-start; line-height: 15px; padding-top: 3px; position: relative; }
.big svg { width: 32px; height: 32px; margin-bottom: 4px; }
.down { width: 5px; height: 3px; background: #dfe2e6; clip-path: polygon(0 0, 100% 0, 50% 100%); align-self: center; justify-self: center; }
.smalls { display: grid; grid-auto-rows: 24px; grid-template-columns: 24px; align-content: start; }
.smalls.with-drop { grid-template-columns: 24px 10px; }
.smalls button { border: 1px solid transparent; }
.smalls .active { border-color: #7cc0f0; background: #2c4a66; }
.draw { width: 225px; }
.b-line { width: 44px; }
.b-pline { width: 43px; }
.b-circle { width: 56px; }
.b-arc { width: 37px; margin-right: 2px; }
.modify { width: 133px; }
.modify .panel-body { padding-left: 2px; }
.modify-grid { grid-template-columns: 24px 36px 24px 10px 36px; }
.annotation { width: 148px; }
.b-text { width: 47px; }
.b-dim { width: 60px; margin-right: 2px; }
.layers { width: 273px; }
.b-layer { width: 62px; }
.layer-tools { flex: 1; padding: 1px 3px 0 0; }
.layer-combo { margin-bottom: 2px; padding-left: 4px; }
.layer-grid { grid-template-columns: repeat(5, 24px); }
.block { width: 80px; }
.b-insert { width: 42px; }
.props { width: 223px; }
.b-match { width: 62px; }
.combo { height: 22px; display: flex; align-items: center; background: #4c566a; border: 1px solid #2d3543; gap: 3px; padding: 0 2px; min-width: 0; }
.combo select { appearance: none; flex: 1; min-width: 0; }
.swatch { width: 14px; height: 14px; background: #fff; margin: 0 1px 0 3px; }
.sample { width: 64px; height: 1px; background: #eef0f2; margin-left: 4px; }
.prop-grid { flex: 1; display: grid; grid-template-columns: 20px 1fr; grid-template-rows: repeat(3, 22px); row-gap: 2px; align-items: center; padding: 1px 2px 0 1px; }
.launcher { position: absolute; right: 4px; bottom: 6px; }
.launcher svg { width: 6px; height: 6px; }
.groups { width: 67px; }
.b-group { width: 41px; }
.folded { width: 60px; flex-direction: column; justify-content: flex-start; background: #4c566a; border: 1px solid #262d38; margin: 2px 0 1px 1px; padding-top: 4px; }
.folded svg { width: 32px; height: 32px; }
.folded span { margin-top: 3px; }
.folded .c { width: 8px; height: 8px; margin: auto 0 3px; }

/* drawing file tabs */
.file-tabs { height: 31px; flex: none; display: flex; border-bottom: 4px solid #3b4453; padding: 3px 0 0 8px; align-items: center; }
.slash { width: 8px; height: 16px; }
.start { width: 42px; }
.file-tab { height: 24px; width: 170px; background: #3b4453; clip-path: polygon(9px 0, 100% 0, 161px 100%, 0 100%); font-weight: bold; gap: 7px; }
.file-tab svg { width: 8px; height: 8px; opacity: .7; }
.add { width: 28px; }

/* workspace */
.workspace { flex: 1; min-height: 0; display: flex; background: #3b4453; overflow: hidden; }
.canvas { flex: 1; background: #000; position: relative; overflow: hidden; }
.drawing { width: 1306px; height: 417px; }
.window { fill: #00173d; stroke: #c4142c; }
.obj { fill: none; stroke: #e2e2e2; }
.obj.in { stroke: #a9c0ea; }
.glow { fill: none; stroke: #2a4473; stroke-width: 4; }
.halo { fill: none; stroke: #6d8bc0; stroke-width: 2; }
.hot { fill: none; stroke: #cbdcfa; }
.axis-x { stroke: #c4142c; }
.axis-y { stroke: #18c018; stroke-width: 1; }
.pick { fill: #000; stroke: #fff; }
.pick-dot { fill: #1667d8; }
.viewport-label { position: absolute; left: 3px; top: 6px; color: #d6d6d6; }
.prompt-tip { position: absolute; left: 731px; top: 353px; width: 142px; height: 21px; padding: 1px 4px; background: #9c9a9d; color: #1d1d1f; white-space: nowrap; }
.ucs { position: absolute; left: 0; bottom: 0; width: 90px; height: 80px; }
.view-buttons { position: absolute; right: 6px; top: 6px; display: flex; }
.view-buttons button { width: 20px; height: 18px; }
.view-buttons svg { width: 10px; height: 10px; }
.compass {
  position: absolute; right: 10px; top: 33px; width: 78px; height: 78px;
  display: grid; grid-template: 14px 1fr 14px / 14px 1fr 14px; place-items: center;
  color: #b4b4b4; font: bold 12px/14px "Liberation Sans", sans-serif;
}
.compass::before { content: ""; position: absolute; left: 4px; top: 4px; width: 70px; height: 70px; border: 7px solid #2b2b2b; border-radius: 50%; }
.compass > * { position: relative; }
.compass .n { grid-area: 1 / 2; }
.compass .w-dir { grid-area: 2 / 1; }
.compass .e { grid-area: 2 / 3; }
.compass .s { grid-area: 3 / 2; }
.compass .top { grid-area: 2 / 2; width: 30px; height: 30px; background: #b9b9bb; border: 1px solid #8c8c8c; color: #555; font: bold 8px/10px "Liberation Sans", sans-serif; }
.wcs { position: absolute; right: 27px; top: 123px; width: 47px; height: 17px; border-radius: 4px; background: #8d8d90; border: 1px solid #a6a6a8; color: #55555a; font: 12px/15px "Liberation Sans", sans-serif; gap: 5px; }
.wcs svg { width: 8px; height: 6px; }

/* docked toolbars */
.tools { width: 24px; flex: none; display: flex; flex-direction: column; align-items: center; border: 1px solid #262d38; margin-bottom: 3px; padding-top: 1px; overflow: hidden; }
.tools-modify { width: 25px; margin-left: 3px; margin-right: 4px; }
.tools-custom { margin-right: 2px; }
.tools button { width: 22px; height: 22px; }
.grip-icon { width: 16px; height: 6px; }
.tools .grip-icon { margin: 0 0 1px; }
.tools hr { width: 19px; height: 2px; border: 0; background: #eee; margin: 2px 0; flex: none; }
.tools hr.dark { width: 23px; height: 1px; background: #262d38; margin: 1px 0 2px; }

/* command line */
.command { height: 69px; flex: none; display: flex; border-top: 4px solid #3b4453; border-bottom: 4px solid #3b4453; }
.command-side { width: 24px; flex: none; display: flex; flex-direction: column; align-items: center; background: #2e3540; padding-top: 5px; gap: 6px; margin-right: 1px; }
.command-side button { height: 16px; }
.command-side .x { height: 10px; margin-bottom: 3px; }
.command-side .x svg { width: 10px; height: 10px; }
.command-main { flex: 1; display: flex; flex-direction: column; color: #111; font: 12px/15px "DejaVu Sans Mono", monospace; border-top: 1px solid #262d38; }
.history { flex: 1; background: #c8c8c8; padding: 7px 2px 0; }
.prompt { height: 21px; display: flex; align-items: center; background: #fff; border-top: 1px solid #222; padding-left: 4px; flex: none; }
.prompt-icon { height: 12px; }
.prompt-chev { width: 8px; height: 8px; margin-left: 1px; }
.prompt input { flex: 1; padding-left: 2px; color: #111; }

/* layout tabs */
.layout-tabs { height: 26px; flex: none; display: flex; align-items: center; padding-left: 8px; }
.model { width: 68px; height: 24px; background: #3b4453; font-weight: bold; clip-path: polygon(9px 0, 100% 0, 59px 100%, 0 100%); }
.lt-1 { width: 190px; }
.lt-2 { width: 178px; }
.lt-3 { width: 175px; }
.lt-4 { width: 151px; }
.lt-5 { width: 113px; }
.layout-tabs .add { width: 33px; }

/* status bar */
.status { height: 30px; flex: none; display: flex; gap: 1px; padding: 4px 0 2px 2px; }
.seg { display: flex; background: #3a4250; flex: none; }
.gap { margin-left: 2px; }
.seg button { width: 24px; }
.seg .d { width: 16px; }
.seg .d svg, .scale-btn svg { width: 8px; height: 8px; }
.blank { width: 44px; }
.coords { width: 240px; align-items: center; justify-content: center; padding-left: 2px; }
.seg .space { width: 47px; }
.seg .hl { background: #5585bf; }
.seg .dim { background: #4d6687; }
.seg .scale-btn { width: 75px; gap: 4px; }
.seg .unit-btn { width: 97px; justify-content: space-between; padding: 0 4px; }
.unit-btn svg { width: 8px; height: 8px; }
.unit-btn .u { width: 16px; height: 16px; }
```
